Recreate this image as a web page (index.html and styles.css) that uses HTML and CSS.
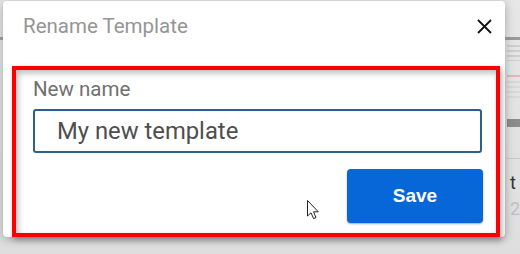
FILE: index.html
```html
<!DOCTYPE html>
<html lang="en">
<head>
  <meta charset="UTF-8">
  <title>Rename Template</title>
  <link rel="stylesheet" href="styles.css">
</head>
<body>

  <div class="screen">
    <!-- Dialog -->
    <div class="dialog">
      <div class="dialog-header">
        <h2 class="dialog-title">Rename Template</h2>
        <button class="close-btn" aria-label="Close">
          <svg width="15" height="15" viewBox="0 0 15 15">
            <path d="M1 1 L14 14 M14 1 L1 14" stroke="#111" stroke-width="1.8" fill="none"/>
          </svg>
        </button>
      </div>

      <!-- highlighted form -->
      <div class="highlight">
        <label class="field-label" for="template-name">New name</label>
        <input class="field-input" id="template-name" type="text" value="My new template">
        <div class="actions">
          <button class="save-btn">Save</button>
        </div>
        <svg class="cursor" width="13" height="20" viewBox="0 0 13 20">
          <path d="M0.5 0.5 L0.5 16 L4 12.8 L6.6 18.6 L9 17.5 L6.5 11.8 L11.3 11.8 Z" fill="#fff" stroke="#222" stroke-width="1"/>
        </svg>
      </div>
    </div>

    <!-- page behind the dialog -->
    <div class="page-edge">
      <div class="edge-bar"></div>
      <div class="edge-text"></div>
      <div class="edge-pink"></div>
      <div class="edge-text short"></div>
      <div class="edge-band"></div>
      <div class="edge-line"></div>
      <div class="edge-char">t</div>
      <div class="edge-char light">2</div>
    </div>
  </div>

</body>
</html>
```

FILE: styles.css
```css
body {
  margin: 0;
  width: 520px;
  height: 254px;
  overflow: hidden;
  font-family: 'Roboto', 'Liberation Sans', sans-serif;
  background:
    linear-gradient(to bottom, transparent 37px, #a4a4a4 37px, #a4a4a4 40px, transparent 40px),
    linear-gradient(to bottom, #e6e6e6, #dedede);
}

.screen {
  display: flex;
  align-items: flex-start;
}

.dialog {
  position: relative;
  margin: 1px 0 0 3px;
  width: 509px;
  height: 236px;
  background-color: #ffffff;
  border-radius: 4px;
  box-shadow: 0 2px 10px rgba(0, 0, 0, 0.28);
  z-index: 1;
}

.dialog-header {
  display: flex;
  justify-content: space-between;
  align-items: flex-start;
  height: 65px;
}

.dialog-title {
  margin: 13px 0 0 20px;
  font-size: 20.5px;
  font-weight: 400;
  line-height: 24px;
  color: #959595;
}

.close-btn {
  margin: 18px 13px 0 0;
  padding: 0;
  border: none;
  background: none;
  width: 15px;
  height: 15px;
  cursor: pointer;
}

.close-btn svg {
  display: block;
}

.highlight {
  position: relative;
  margin-left: 9px;
  width: 449px;
  height: 156px;
  border: 4px solid #fa0000;
  padding: 7px 14px 0 17px;
  box-sizing: content-box;
  box-shadow: 2px 3px 6px rgba(0, 0, 0, 0.3), inset 2px 3px 6px rgba(0, 0, 0, 0.28);
}

.field-label {
  display: block;
  font-size: 20.5px;
  line-height: 24px;
  color: #707070;
}

.field-input {
  display: block;
  box-sizing: border-box;
  margin-top: 8px;
  width: 449px;
  height: 44px;
  padding: 0 0 0 22px;
  border: 2px solid #2c5f8c;
  border-radius: 3px;
  font-family: 'Roboto', sans-serif;
  font-size: 23.8px;
  color: #4e4e4e;
  outline: none;
}

.actions {
  display: flex;
  justify-content: flex-end;
  margin-top: 16px;
}

.save-btn {
  width: 136px;
  height: 54px;
  margin-right: -1px;
  border: none;
  border-radius: 4px;
  background-color: #0867d8;
  box-shadow: 0 1px 2px rgba(0, 0, 0, 0.35);
  color: #ffffff;
  font-family: 'Liberation Sans', Arial, sans-serif;
  font-weight: bold;
  font-size: 19px;
  cursor: pointer;
}

.cursor {
  position: absolute;
  left: 291px;
  top: 130px;
}

.page-edge {
  flex: 1;
  padding-top: 37px;
  padding-left: 2px;
}

.edge-bar {
  height: 3px;
  background-color: #9a9a9a;
}

.edge-text {
  height: 16px;
  margin-top: 5px;
  background: repeating-linear-gradient(to bottom, #c4c4c4 0, #c4c4c4 2px, transparent 2px, transparent 5px);
  opacity: 0.7;
}

.edge-text.short {
  margin-top: 4px;
  height: 20px;
  opacity: 0.35;
}

.edge-pink {
  height: 2px;
  margin-top: 14px;
  background-color: #e5b5b5;
}

.edge-band {
  height: 8px;
  margin-top: 18px;
  background-color: #8c8c8c;
}

.edge-line {
  height: 1px;
  margin-top: 31px;
  background-color: #c8c8c8;
}

.edge-char {
  padding-left: 3px;
  font-size: 18px;
  line-height: 24px;
  margin-top: 12px;
  color: #333;
}

.edge-char.light {
  margin-top: 2px;
  color: #c0c0c0;
}
```
